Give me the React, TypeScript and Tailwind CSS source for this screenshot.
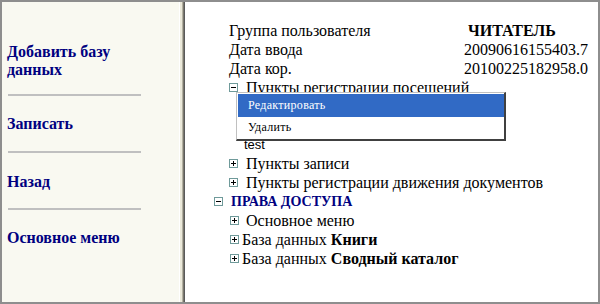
import React from "react";

function TreeBox({ open }: { open: boolean }) {
  return (
    <svg width="9" height="9" viewBox="0 0 9 9" className="shrink-0">
      <rect x="0.5" y="0.5" width="8" height="8" fill="#ffffff" stroke="#6f9a9a" />
      <line x1="2" y1="4.5" x2="7" y2="4.5" stroke="#000000" />
      {!open && <line x1="4.5" y1="2" x2="4.5" y2="7" stroke="#000000" />}
    </svg>
  );
}

function Separator({ className }: { className: string }) {
  return <div className={`h-[2px] w-[133px] ml-[1px] bg-[#c0c0c0] ${className}`} />;
}

const linkText = "font-bold text-[16px] leading-[18px] text-[#000080] w-[140px]";

export default function App() {
  return (
    <div className="w-[600px] h-[304px] flex border-2 border-[#8e8e8e] bg-white font-['Liberation_Serif'] text-black">
      <div className="w-[177px] bg-[#f9f9f1] flex flex-col pl-[5px] pt-[41px]">
        <a className={linkText}>Добавить базу данных</a>
        <Separator className="mt-[15px]" />
        <a className={`${linkText} mt-[19px]`}>Записать</a>
        <Separator className="mt-[18px]" />
        <a className={`${linkText} mt-[20px]`}>Назад</a>
        <Separator className="mt-[17px]" />
        <a className={`${linkText} mt-[19px]`}>Основное меню</a>
      </div>
      <div className="flex">
        <div className="w-[1px] bg-[#ffffff]" />
        <div className="w-[2px] bg-[#ebe9da]" />
        <div className="w-[1px] bg-[#b4b1a2]" />
        <div className="w-[1px] bg-[#7a786e]" />
        <div className="w-[1px] bg-[#5a5a5a]" />
      </div>
      <div className="relative flex-1 pl-[29px] pt-[19px] text-[16px] leading-[19px]">
        <div className="flex h-[19px] pl-[15px]">
          <span className="w-[235px]">Группа пользователя</span>
          <span className="font-bold">&nbsp;ЧИТАТЕЛЬ</span>
        </div>
        <div className="flex h-[19px] pl-[15px]">
          <span className="w-[235px]">Дата ввода</span>
          <span>20090616155403.7</span>
        </div>
        <div className="flex h-[19px] pl-[15px]">
          <span className="w-[235px]">Дата кор.</span>
          <span>20100225182958.0</span>
        </div>
        <div className="flex items-center h-[19px] pl-[15px] gap-[8px]">
          <TreeBox open />
          <span>Пункты регистрации посещений</span>
        </div>
        <div className="h-[38px]" />
        <div className="flex items-center h-[19px] pl-[30px] font-['Liberation_Sans'] text-[13px]">
          test
        </div>
        <div className="flex items-center h-[19px] pl-[15px] gap-[8px]">
          <TreeBox open={false} />
          <span>Пункты записи</span>
        </div>
        <div className="flex items-center h-[19px] pl-[15px] gap-[8px]">
          <TreeBox open={false} />
          <span>Пункты регистрации движения документов</span>
        </div>
        <div className="flex items-center h-[19px] gap-[8px]">
          <TreeBox open />
          <span className="font-bold text-[14px] text-[#000080]">ПРАВА ДОСТУПА</span>
        </div>
        <div className="flex items-center h-[19px] pl-[16px] gap-[3px]">
          <TreeBox open={false} />
          <span>&nbsp;Основное меню</span>
        </div>
        <div className="flex items-center h-[19px] pl-[16px] gap-[3px]">
          <TreeBox open={false} />
          <span>
            База данных <b>Книги</b>
          </span>
        </div>
        <div className="flex items-center h-[19px] pl-[16px] gap-[3px]">
          <TreeBox open={false} />
          <span>
            База данных <b>Сводный каталог</b>
          </span>
        </div>

        <div className="absolute left-[51px] top-[90px] w-[270px] h-[49px] bg-white border-l border-t border-[#c0c0c0] border-r-2 border-b-2 border-r-[#404040] border-b-[#404040] pl-[1px] pt-[1px] flex flex-col text-[12px] tracking-[0.3px]">
          <div className="h-[23px] bg-[#316ac5] text-white flex items-center pl-[10px]">Редактировать</div>
          <div className="h-[23px] flex items-center pl-[10px]">Удалить</div>
        </div>
      </div>
    </div>
  );
}
